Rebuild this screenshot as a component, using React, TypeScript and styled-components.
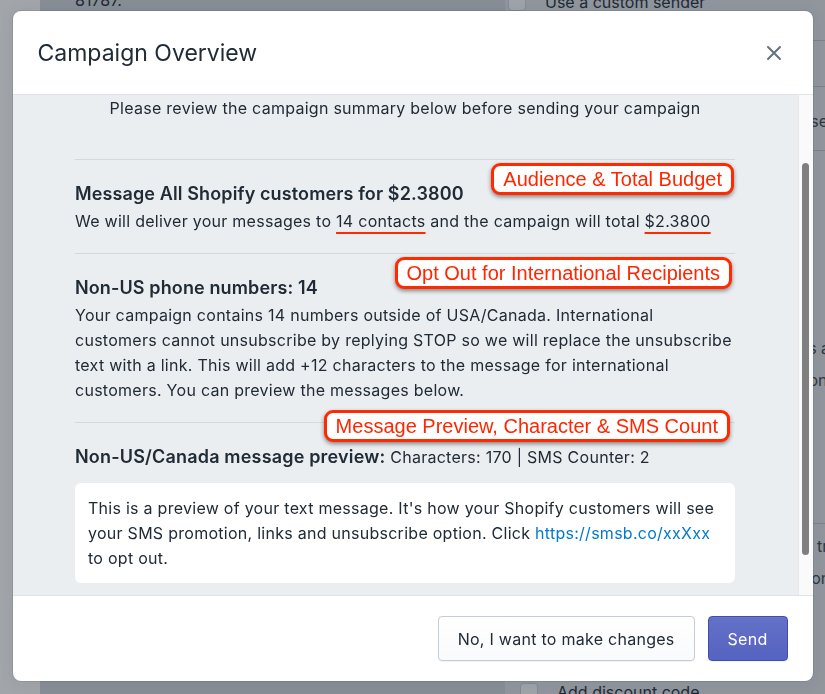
import { useLayoutEffect, useRef } from 'react';
import styled, { createGlobalStyle } from 'styled-components';

const GlobalStyle = createGlobalStyle`
  html, body {
    margin: 0;
    padding: 0;
    height: 100%;
    overflow: hidden;
  }
  body {
    font-family: Inter, "Noto Sans", sans-serif;
    color: #212b36;
    -webkit-font-smoothing: antialiased;
  }
  * { box-sizing: border-box; }
`;

// ---- page behind the modal ----

const Page = styled.div`
  display: flex;
  height: 100vh;
  overflow: hidden;
`;

const SideNav = styled.div`
  width: 40px;
  flex-shrink: 0;
  background: #f8f8f8;
`;

const Main = styled.div`
  flex: 1;
  display: grid;
  grid-template-columns: 465px 1fr;
  background: #cdd0d6;
  font-size: 16px;
  line-height: 24px;
`;

const LeftCol = styled.div`
  padding-left: 35px;
  margin-top: -12px;
`;

const RightCol = styled.div`
  display: flex;
  flex-direction: column;
  margin-top: -10px;
  background: #dcdee2;
  white-space: nowrap;
  overflow: hidden;
`;

const CheckRow = styled.div<{ $indent: number; $top?: number }>`
  display: flex;
  align-items: center;
  gap: 19px;
  padding-left: ${p => p.$indent}px;
  margin-top: ${p => p.$top ?? 0}px;
`;

const Box = styled.span`
  width: 18px;
  height: 18px;
  border-radius: 4px;
  background: #f4f5f6;
  border: 1px solid #c4cdd5;
`;

const BgLine = styled.div<{ $top: number }>`
  margin-top: ${p => p.$top}px;
  padding-left: 40px;
  color: #3a4149;
`;

const BgRule = styled.div<{ $top: number }>`
  margin-top: ${p => p.$top}px;
  border-top: 1px solid #b9bdc4;
`;

const Backdrop = styled.div`
  position: fixed;
  inset: 0;
  background: rgba(33, 43, 54, 0.4);
`;

// ---- modal ----

const ModalWrap = styled.div`
  position: fixed;
  inset: 0;
  display: flex;
  justify-content: center;
  align-items: flex-start;
  padding-top: 11px;
`;

const Modal = styled.div`
  width: 800px;
  background: #fff;
  border-radius: 8px;
  overflow: hidden;
  box-shadow: 0 0 0 1px rgba(6, 44, 82, 0.1), 0 2px 16px rgba(33, 43, 54, 0.08);
`;

const Header = styled.div`
  height: 84px;
  display: flex;
  align-items: center;
  justify-content: space-between;
  padding: 0 21px 0 25px;
  border-bottom: 1px solid #dfe3e8;
`;

const Title = styled.h2`
  margin: 0;
  font-size: 23px;
  font-weight: 400;
  line-height: 28px;
  color: #212b36;
`;

const CloseButton = styled.button`
  width: 36px;
  height: 36px;
  display: flex;
  align-items: center;
  justify-content: center;
  border: none;
  background: none;
  color: #637381;
  padding: 0;
  cursor: pointer;
`;

const BodyRow = styled.div`
  display: flex;
  height: 500px;
  background: #ebeef0;
`;

const ScrollArea = styled.div`
  flex: 1;
  overflow-y: scroll;
  scrollbar-width: none;
  &::-webkit-scrollbar { display: none; }
`;

const ScrollTrack = styled.div`
  width: 15px;
  flex-shrink: 0;
  background: #fafafa;
  border-left: 1px solid #e8e8e8;
  padding: 68px 0 0 3px;
`;

const Thumb = styled.div`
  width: 7px;
  height: 392px;
  border-radius: 4px;
  background: #7f7f7f;
`;

const Content = styled.div`
  width: 660px;
  margin: 0 auto;
  padding: 87px 0 64px;
  font-size: 16px;
  line-height: 25px;
  letter-spacing: 0.27px;
`;

const Intro = styled.p`
  margin: 0 0 38px;
  text-align: center;
`;

const Section = styled.section`
  position: relative;
  border-top: 1px solid #d3d8dd;
  padding: 22px 0 19px;
`;

const Heading = styled.h3`
  margin: 0 0 3px;
  font-size: 18px;
  font-weight: 600;
  line-height: 24px;
  letter-spacing: 0.12px;
`;

const Text = styled.p`
  margin: 0;
`;

const PreviewHead = styled.p`
  margin: 0 0 14px;
  line-height: 24px;

  strong {
    font-size: 18px;
    font-weight: 600;
    letter-spacing: 0.18px;
  }
`;

const PreviewBox = styled.div`
  background: #fff;
  border-radius: 6px;
  padding: 13px 13px 12px;
`;

const Link = styled.a`
  color: #007ace;
  text-decoration: none;
`;

const Marked = styled.span`
  text-decoration: underline;
  text-decoration-color: #ff2a00;
  text-decoration-thickness: 2px;
  text-underline-offset: 5px;
`;

const Callout = styled.div<{ $top: number; $right: number }>`
  position: absolute;
  top: ${p => p.$top}px;
  right: ${p => p.$right}px;
  padding: 0 9px;
  border: 3px solid #ff2a00;
  border-radius: 9px;
  background: #fff;
  color: #ff2600;
  font-family: "Liberation Sans", Arial, sans-serif;
  font-size: 20px;
  line-height: 26px;
  letter-spacing: 0;
  white-space: nowrap;
  box-shadow: 0 2px 4px rgba(0, 0, 0, 0.45);
`;

const Footer = styled.div`
  display: flex;
  justify-content: flex-end;
  gap: 13px;
  padding: 20px 25px;
  border-top: 1px solid #dfe3e8;
`;

const Button = styled.button<{ $primary?: boolean }>`
  height: 45px;
  padding: 0 19px;
  font-family: inherit;
  font-size: 16px;
  letter-spacing: 0.27px;
  border-radius: 4px;
  cursor: pointer;
  color: ${p => (p.$primary ? '#fff' : '#212b36')};
  border: 1px solid ${p => (p.$primary ? '#3f4eae' : '#c4cdd5')};
  background: ${p =>
    p.$primary
      ? 'linear-gradient(180deg, #6371c7, #5563c1)'
      : 'linear-gradient(180deg, #fff, #f9fafb)'};
  box-shadow: ${p =>
    p.$primary
      ? 'inset 0 1px 0 0 #6774c8, 0 1px 0 0 rgba(22,29,37,.05)'
      : '0 1px 0 0 rgba(22,29,37,.05)'};
`;

const CloseIcon = () => (
  <svg width="16" height="16" viewBox="0 0 16 16" fill="none">
    <path d="M2 2l12 12M14 2L2 14" stroke="currentColor" strokeWidth="2" strokeLinecap="round" />
  </svg>
);

export default function App() {
  const scrollRef = useRef<HTMLDivElement>(null);

  useLayoutEffect(() => {
    if (scrollRef.current) scrollRef.current.scrollTop = 86;
  }, []);

  return (
    <>
      <GlobalStyle />
      <Page>
        <SideNav />
        <Main>
          <LeftCol>81787.</LeftCol>
          <RightCol>
            <CheckRow $indent={3}>
              <Box />
              Use a custom sender
            </CheckRow>
            <BgRule $top={26} />
            <BgRule $top={45} />
            <BgLine $top={22}>Your customers will see a branded sender name the</BgLine>
            <BgRule $top={17} />
            <BgLine $top={185}>Customers can opt out of your texts at any time and</BgLine>
            <BgLine $top={8}>choose whether to receive promotional messages later</BgLine>
            <BgRule $top={131} />
            <BgLine $top={10}>Add a short link to your message to track the usage.</BgLine>
            <BgLine $top={8}>A discount code can increase the conversion and action</BgLine>
            <CheckRow $indent={15} $top={90}>
              <Box />
              Add discount code
            </CheckRow>
          </RightCol>
        </Main>
      </Page>
      <Backdrop />
      <ModalWrap>
        <Modal>
          <Header>
            <Title>Campaign Overview</Title>
            <CloseButton aria-label="Close">
              <CloseIcon />
            </CloseButton>
          </Header>
          <BodyRow>
            <ScrollArea ref={scrollRef}>
              <Content>
                <Intro>Please review the campaign summary below before sending your campaign</Intro>

                <Section>
                  <Heading>Message All Shopify customers for $2.3800</Heading>
                  <Text>
                    We will deliver your messages to <Marked>14 contacts</Marked> and the campaign will total{' '}
                    <Marked>$2.3800</Marked>
                  </Text>
                  <Callout $top={3} $right={1}>Audience &amp; Total Budget</Callout>
                </Section>

                <Section>
                  <Heading>Non-US phone numbers: 14</Heading>
                  <Text>
                    Your campaign contains 14 numbers outside of USA/Canada. International customers cannot
                    unsubscribe by replying STOP so we will replace the unsubscribe text with a link. This will
                    add +12 characters to the message for international customers. You can preview the
                    messages below.
                  </Text>
                  <Callout $top={3} $right={3}>Opt Out for International Recipients</Callout>
                </Section>

                <Section>
                  <PreviewHead>
                    <strong>Non-US/Canada message preview:</strong> Characters: 170 | SMS Counter: 2
                  </PreviewHead>
                  <PreviewBox>
                    This is a preview of your text message. It's how your Shopify customers will see your SMS
                    promotion, links and unsubscribe option. Click <Link href="#">https://smsb.co/xxXxx</Link>{' '}
                    to opt out.
                  </PreviewBox>
                  <Callout $top={-13} $right={5}>Message Preview, Character &amp; SMS Count</Callout>
                </Section>
              </Content>
            </ScrollArea>
            <ScrollTrack>
              <Thumb />
            </ScrollTrack>
          </BodyRow>
          <Footer>
            <Button>No, I want to make changes</Button>
            <Button $primary>Send</Button>
          </Footer>
        </Modal>
      </ModalWrap>
    </>
  );
}
